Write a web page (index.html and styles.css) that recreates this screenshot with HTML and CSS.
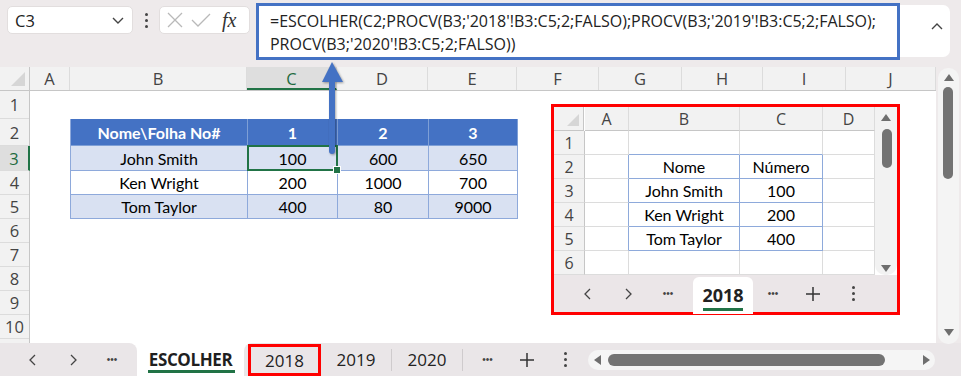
FILE: index.html
```html
<!DOCTYPE html>
<html>

<head>
    <title>ESCOLHER - Excel</title>
    <meta name="viewport" content="width=device-width, initial-scale=1.0">
    <link rel="stylesheet" href="styles.css">
</head>

<body>
    <div class="app">
        <!-- formula bar -->
        <div class="formula-bar">
            <div class="name-box">
                <span>C3</span>
                <svg width="14" height="10" viewBox="0 0 14 10"><polyline points="2,3 7,8 12,3" fill="none" stroke="#444" stroke-width="1.4"/></svg>
            </div>
            <div class="grip"><i></i><i></i><i></i></div>
            <div class="fx-box">
                <svg width="18" height="18" viewBox="0 0 18 18"><path d="M2 2 L16 16 M16 2 L2 16" stroke="#b9b9b9" stroke-width="1.3"/></svg>
                <svg width="22" height="18" viewBox="0 0 22 18"><polyline points="2,9 8,15 20,3" fill="none" stroke="#b9b9b9" stroke-width="1.3"/></svg>
                <span class="fx">fx</span>
            </div>
            <div class="formula">=ESCOLHER(C2;PROCV(B3;'2018'!B3:C5;2;FALSO);PROCV(B3;'2019'!B3:C5;2;FALSO);<br>PROCV(B3;'2020'!B3:C5;2;FALSO))</div>
            <div class="expand">
                <svg width="14" height="10" viewBox="0 0 14 10"><polyline points="2,8 7,3 12,8" fill="none" stroke="#444" stroke-width="1.4"/></svg>
            </div>
        </div>

        <!-- sheet -->
        <div class="workspace">
            <div class="sheet">
                <div class="col-heads">
                    <div class="corner"><span class="tri"></span></div>
                    <div class="ch w-a">A</div>
                    <div class="ch w-b">B</div>
                    <div class="ch w-c active">C</div>
                    <div class="ch w-d">D</div>
                    <div class="ch w-e">E</div>
                    <div class="ch w-f">F</div>
                    <div class="ch w-g">G</div>
                    <div class="ch w-h">H</div>
                    <div class="ch w-i">I</div>
                    <div class="ch w-j">J</div>
                </div>
                <div class="sheet-body">
                    <div class="row-heads">
                        <div class="rh r1">1</div>
                        <div class="rh r2">2</div>
                        <div class="rh r3 active">3</div>
                        <div class="rh">4</div>
                        <div class="rh">5</div>
                        <div class="rh">6</div>
                        <div class="rh">7</div>
                        <div class="rh">8</div>
                        <div class="rh">9</div>
                        <div class="rh">10</div>
                        <div class="rh"></div>
                    </div>
                    <div class="cells">
                        <div class="data-table">
                            <div class="cell head">Nome\Folha No#</div>
                            <div class="cell head">1</div>
                            <div class="cell head">2</div>
                            <div class="cell head">3</div>

                            <div class="cell band">John Smith</div>
                            <div class="cell band sel">100</div>
                            <div class="cell band">600</div>
                            <div class="cell band">650</div>

                            <div class="cell">Ken Wright</div>
                            <div class="cell">200</div>
                            <div class="cell">1000</div>
                            <div class="cell">700</div>

                            <div class="cell band">Tom Taylor</div>
                            <div class="cell band">400</div>
                            <div class="cell band">80</div>
                            <div class="cell band">9000</div>
                        </div>
                    </div>
                </div>
            </div>
            <div class="vscroll">
                <span class="arr-up"></span>
                <span class="thumb"></span>
                <span class="arr-down"></span>
            </div>
        </div>

        <!-- sheet tabs -->
        <div class="tab-bar">
            <div class="nav-group">
                <span class="nav"><svg width="10" height="14" viewBox="0 0 10 14"><polyline points="7,2 2,7 7,12" fill="none" stroke="#444" stroke-width="1.3"/></svg></span>
                <span class="nav"><svg width="10" height="14" viewBox="0 0 10 14"><polyline points="3,2 8,7 3,12" fill="none" stroke="#444" stroke-width="1.3"/></svg></span>
                <span class="nav dots">&bull;&bull;&bull;</span>
            </div>
            <div class="tab current">ESCOLHER</div>
            <div class="tab-group">
                <div class="tab marked">2018</div>
                <div class="tab sep">2019</div>
                <div class="tab sep">2020</div>
                <span class="nav dots">&bull;&bull;&bull;</span>
                <span class="nav"><svg width="16" height="16" viewBox="0 0 16 16"><path d="M8 1 V15 M1 8 H15" stroke="#333" stroke-width="1.5"/></svg></span>
                <span class="nav"><span class="kebab"><i></i><i></i><i></i></span></span>
                <div class="hscroll">
                    <span class="arr-left"></span>
                    <span class="hthumb"></span>
                    <span class="arr-right"></span>
                </div>
            </div>
        </div>

        <!-- arrow pointing at the formula -->
        <svg class="arrow" width="30" height="100" viewBox="0 0 30 100">
            <rect x="11" y="20" width="6" height="76" rx="3" fill="#4472c4"/>
            <polygon points="4,24 25,24 14,4" fill="#4472c4"/>
        </svg>

        <!-- picture of sheet 2018 -->
        <div class="picture">
            <div class="mini-top">
                <div class="mini-grid">
                    <div class="m mh corner"><span class="tri small"></span></div>
                    <div class="m mh">A</div>
                    <div class="m mh">B</div>
                    <div class="m mh">C</div>
                    <div class="m mh">D</div>

                    <div class="m mr">1</div>
                    <div class="m first-col"></div>
                    <div class="m t-top"></div>
                    <div class="m t-top"></div>
                    <div class="m"></div>

                    <div class="m mr">2</div>
                    <div class="m t-left"></div>
                    <div class="m t">Nome</div>
                    <div class="m t">Número</div>
                    <div class="m"></div>

                    <div class="m mr">3</div>
                    <div class="m t-left"></div>
                    <div class="m t">John Smith</div>
                    <div class="m t">100</div>
                    <div class="m"></div>

                    <div class="m mr">4</div>
                    <div class="m t-left"></div>
                    <div class="m t">Ken Wright</div>
                    <div class="m t">200</div>
                    <div class="m"></div>

                    <div class="m mr">5</div>
                    <div class="m t-left"></div>
                    <div class="m t">Tom Taylor</div>
                    <div class="m t">400</div>
                    <div class="m"></div>

                    <div class="m mr">6</div>
                    <div class="m"></div>
                    <div class="m"></div>
                    <div class="m"></div>
                    <div class="m"></div>
                </div>
                <div class="mini-vscroll">
                    <span class="arr-up"></span>
                    <span class="mini-thumb"></span>
                    <span class="arr-down"></span>
                </div>
            </div>
            <div class="mini-tabs">
                <span class="nav"><svg width="10" height="14" viewBox="0 0 10 14"><polyline points="7,2 2,7 7,12" fill="none" stroke="#444" stroke-width="1.3"/></svg></span>
                <span class="nav"><svg width="10" height="14" viewBox="0 0 10 14"><polyline points="3,2 8,7 3,12" fill="none" stroke="#444" stroke-width="1.3"/></svg></span>
                <span class="nav dots">&bull;&bull;&bull;</span>
                <div class="mini-tab">2018</div>
                <span class="nav dots">&bull;&bull;&bull;</span>
                <span class="nav"><svg width="16" height="16" viewBox="0 0 16 16"><path d="M8 1 V15 M1 8 H15" stroke="#333" stroke-width="1.5"/></svg></span>
                <span class="nav"><span class="kebab"><i></i><i></i><i></i></span></span>
            </div>
        </div>
    </div>
</body>

</html>
```

FILE: styles.css
```css
* {
    box-sizing: border-box;
}

body {
    margin: 0;
    font-family: "Open Sans", "Noto Sans", sans-serif;
    background-color: #fff;
}

.app {
    position: relative;
    width: 961px;
    height: 376px;
    overflow: hidden;
    background-color: #eeeaeb;
}

/* formula bar */
.formula-bar {
    height: 67px;
    display: flex;
    align-items: flex-start;
}

.name-box {
    margin: 6px 0 0 7px;
    width: 126px;
    height: 28px;
    background-color: #fff;
    border: 1px solid #e2dede;
    border-radius: 5px;
    display: flex;
    align-items: center;
    justify-content: space-between;
    padding: 0 7px 0 7px;
    font-size: 16.5px;
    color: #222;
}

.grip {
    margin: 13px 0 0 12px;
    display: flex;
    flex-direction: column;
    gap: 3px;
}

.grip i,
.kebab i {
    display: block;
    width: 3px;
    height: 3px;
    border-radius: 50%;
    background-color: #444;
}

.fx-box {
    margin: 6px 0 0 11px;
    width: 91px;
    height: 28px;
    background-color: #fff;
    border: 1px solid #e2dede;
    border-radius: 5px;
    display: flex;
    align-items: center;
    gap: 6px;
    padding-left: 6px;
}

.fx {
    font-family: "Liberation Serif", serif;
    font-style: italic;
    font-size: 20px;
    color: #333;
    margin-left: 4px;
}

.formula {
    margin: 3px 0 0 6px;
    width: 644px;
    height: 57px;
    border: 3px solid #4472c4;
    background-color: #fff;
    padding: 4px 0 0 11px;
    font-size: 16px;
    letter-spacing: -0.01px;
    line-height: 23px;
    color: #222;
    white-space: nowrap;
}

.expand {
    margin-top: 5px;
    width: 50px;
    height: 52px;
    background-color: #fff;
    border-radius: 0 7px 7px 0;
    padding: 9px 0 0 30px;
}

/* sheet */
.workspace {
    height: 276px;
    display: flex;
}

.sheet {
    width: 936px;
    overflow: hidden;
    background-color: #fff;
}

.col-heads {
    display: flex;
    height: 24px;
    background-color: #f2f2f2;
    border-bottom: 1px solid #c6c6c6;
}

.corner {
    position: relative;
    width: 30px;
    border-right: 1px solid #c6c6c6;
}

.tri {
    position: absolute;
    right: 4px;
    bottom: 4px;
    width: 0;
    height: 0;
    border-left: 14px solid transparent;
    border-bottom: 14px solid #d6d6d6;
}

.tri.small {
    border-left-width: 12px;
    border-bottom-width: 12px;
}

.ch {
    border-right: 1px solid #dcdcdc;
    text-align: center;
    font-size: 16.5px;
    line-height: 23px;
    color: #444;
}

.ch.active {
    background-color: #dedede;
    color: #1e6b3f;
    border-bottom: 2px solid #217346;
}

.w-a { width: 40px; }
.w-b { width: 177px; }
.w-c { width: 90px; }
.w-d { width: 91px; }
.w-e { width: 89px; }
.w-f { width: 82px; }
.w-g { width: 83px; }
.w-h { width: 81px; }
.w-i { width: 83px; }
.w-j { width: 90px; }

.sheet-body {
    display: flex;
}

.row-heads {
    width: 30px;
    background-color: #f2f2f2;
    border-right: 1px solid #c6c6c6;
}

.rh {
    height: 24px;
    border-bottom: 1px solid #dcdcdc;
    text-align: center;
    font-size: 16.5px;
    line-height: 24px;
    color: #444;
}

.rh.r1 { height: 28px; line-height: 28px; }
.rh.r2 { height: 27px; line-height: 27px; }
.rh.r3 { height: 25px; line-height: 25px; }

.rh.active {
    background-color: #dedede;
    color: #1e6b3f;
    border-right: 2px solid #217346;
    margin-right: -1px;
}

.cells {
    flex: 1;
    padding: 28px 0 0 40px;
}

.data-table {
    display: grid;
    grid-template-columns: 177px 90px 91px 89px;
    grid-template-rows: 27px 25px 24px 24px;
    border-left: 1px solid #8ea9db;
    width: 447px;
    font-family: Lato, "Liberation Sans", sans-serif;
    font-size: 16px;
    color: #000;
}

.cell {
    display: flex;
    align-items: center;
    justify-content: center;
    border-right: 1px solid #8ea9db;
    border-bottom: 1px solid #8ea9db;
}

.cell.head {
    background-color: #4472c4;
    color: #fff;
    font-weight: bold;
    border-color: #7e9fd6;
}

.cell.band {
    background-color: #d9e1f2;
}

.cell.sel {
    position: relative;
}

.cell.sel::after {
    content: "";
    position: absolute;
    left: -1px;
    top: -1px;
    right: -1px;
    bottom: -1px;
    border: 2px solid #217346;
}

.cell.sel::before {
    content: "";
    position: absolute;
    right: -4px;
    bottom: -4px;
    width: 6px;
    height: 6px;
    background-color: #217346;
    border: 1px solid #fff;
    z-index: 1;
}

/* vertical scroll bar */
.vscroll {
    margin: 1px 0 0 2px;
    width: 21px;
    height: 276px;
    background-color: #f4f4f4;
    border-radius: 10px;
    position: relative;
}

.arr-up,
.arr-down {
    position: absolute;
    left: 50%;
    margin-left: -5px;
    width: 0;
    height: 0;
    border-left: 5px solid transparent;
    border-right: 5px solid transparent;
}

.vscroll .arr-up {
    top: 6px;
    border-bottom: 7px solid #6e6e6e;
}

.vscroll .arr-down {
    bottom: 8px;
    border-top: 7px solid #6e6e6e;
}

.thumb {
    position: absolute;
    left: 5px;
    top: 19px;
    width: 10px;
    height: 92px;
    border-radius: 5px;
    background-color: #737373;
}

/* sheet tabs */
.tab-bar {
    height: 33px;
    display: flex;
    background-color: #fff;
}

.nav-group {
    width: 137px;
    display: flex;
    align-items: center;
    padding-left: 13px;
    background-color: #eae6e8;
    border-radius: 0 8px 0 0;
}

.nav {
    width: 40px;
    height: 100%;
    display: flex;
    align-items: center;
    justify-content: center;
    color: #444;
}

.nav-group .nav:last-child {
    width: 38px;
}

.dots {
    font-size: 10px;
    letter-spacing: 0;
    font-family: "Liberation Sans", sans-serif;
}

.kebab {
    display: flex;
    flex-direction: column;
    gap: 3px;
}

.tab {
    display: flex;
    align-items: center;
    justify-content: center;
    font-size: 17px;
    color: #222;
}

.tab.current {
    width: 107px;
    font-weight: bold;
    color: #1f1f1f;
    letter-spacing: -0.4px;
    background-color: #fff;
    position: relative;
}

.tab.current::after {
    content: "";
    position: absolute;
    left: 11px;
    right: 9px;
    bottom: 3px;
    height: 3px;
    background-color: #217346;
}

.tab-group {
    flex: 1;
    display: flex;
    align-items: center;
    background-color: #eae6e8;
    border-radius: 8px 0 0 0;
    padding-left: 4px;
}

.tab.marked {
    width: 73px;
    height: 32px;
    margin-top: 1px;
    border: 3px solid #f00;
}

.tab.sep {
    width: 71px;
    height: 22px;
    border-right: 1px solid #cfcbcd;
}

.tab-group .dots {
    margin-left: 5px;
}

.tab-group .nav {
    width: 39px;
}

.hscroll {
    position: relative;
    margin-left: 3px;
    width: 347px;
    height: 20px;
    border-radius: 10px;
    background-color: #f5f5f5;
}

.arr-left,
.arr-right {
    position: absolute;
    top: 5px;
    width: 0;
    height: 0;
    border-top: 5px solid transparent;
    border-bottom: 5px solid transparent;
}

.arr-left {
    left: 6px;
    border-right: 7px solid #6e6e6e;
}

.arr-right {
    right: 5px;
    border-left: 7px solid #6e6e6e;
}

.hthumb {
    position: absolute;
    left: 20px;
    top: 4px;
    width: 277px;
    height: 12px;
    border-radius: 6px;
    background-color: #737373;
}

/* arrow */
.arrow {
    position: absolute;
    left: 318px;
    top: 58px;
    filter: drop-shadow(1px 1px 1px rgba(0, 0, 0, 0.35));
}

/* picture of sheet 2018 */
.picture {
    position: absolute;
    left: 551px;
    top: 104px;
    width: 349px;
    height: 211px;
    border: 3px solid #f00;
    background-color: #ebe6e8;
    display: flex;
    flex-direction: column;
}

.mini-top {
    display: flex;
    height: 168px;
    background-color: #fff;
}

.mini-grid {
    display: grid;
    grid-template-columns: 31px 44px 111px 83px 52px;
    grid-template-rows: repeat(7, 24px);
    font-family: Lato, "Liberation Sans", sans-serif;
    font-size: 16px;
    color: #000;
}

.m {
    border-right: 1px solid #dcdcdc;
    border-bottom: 1px solid #dcdcdc;
    display: flex;
    align-items: center;
    justify-content: center;
}

.mh {
    background-color: #f2f2f2;
    font-family: "Open Sans", sans-serif;
    font-size: 16px;
    color: #444;
    border-bottom-color: #c6c6c6;
}

.mh.corner {
    position: relative;
    border-right-color: #c6c6c6;
}

.mr {
    background-color: #f2f2f2;
    font-family: "Open Sans", sans-serif;
    font-size: 16px;
    color: #444;
    border-right-color: #c6c6c6;
}

.m.t {
    border-color: #8eaadb;
}

.m.t-left {
    border-right-color: #8eaadb;
}

.m.t-top {
    border-bottom-color: #8eaadb;
}

.mini-vscroll {
    position: relative;
    width: 22px;
    background-color: #f2f2f2;
    border-radius: 0 0 10px 10px;
}

.mini-vscroll .arr-up {
    top: 7px;
    border-bottom: 7px solid #6e6e6e;
}

.mini-vscroll .arr-down {
    bottom: 3px;
    border-top: 7px solid #6e6e6e;
}

.mini-thumb {
    position: absolute;
    left: 7px;
    top: 22px;
    width: 10px;
    height: 39px;
    border-radius: 5px;
    background-color: #737373;
}

.mini-tabs {
    flex: 1;
    display: flex;
    align-items: center;
    padding-left: 14px;
}

.mini-tab {
    margin: 3px 0 0 5px;
    width: 60px;
    height: 100%;
    background-color: #fff;
    border-radius: 6px 6px 0 0;
    font-size: 18px;
    font-weight: bold;
    color: #222;
    display: flex;
    align-items: center;
    justify-content: center;
    position: relative;
}

.mini-tab::after {
    content: "";
    position: absolute;
    left: 10px;
    right: 10px;
    bottom: 3px;
    height: 3px;
    background-color: #217346;
}
```
